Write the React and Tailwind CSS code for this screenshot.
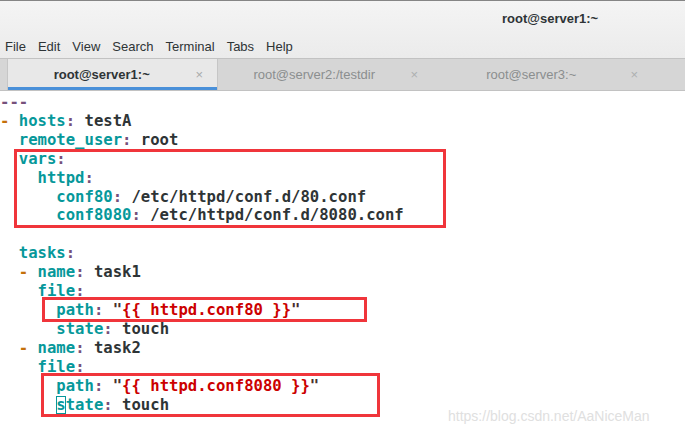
import React from "react";

const mono = { fontFamily: '"DejaVu Sans Mono", "Liberation Mono", monospace' };

const K = ({ children }) => <span className="text-[#06989a]">{children}</span>;
const C = () => <span className="text-[#75507b]">:</span>;
const V = ({ children }) => <span className="text-[#2e3436]">{children}</span>;
const D = () => <span className="text-[#c4700a]">-</span>;
const S = ({ children }) => (
  <>
    <span className="text-[#4a2f2f]">"</span>
    <span className="text-[#cc0000]">{children}</span>
    <span className="text-[#4a2f2f]">"</span>
  </>
);

const lines = [
  [<span className="text-[#75507b]">---</span>],
  [<D />, " ", <K>hosts</K>, <C />, " ", <V>testA</V>],
  ["  ", <K>remote_user</K>, <C />, " ", <V>root</V>],
  ["  ", <K>vars</K>, <C />],
  ["    ", <K>httpd</K>, <C />],
  ["      ", <K>conf80</K>, <C />, " ", <V>/etc/httpd/conf.d/80.conf</V>],
  ["      ", <K>conf8080</K>, <C />, " ", <V>/etc/httpd/conf.d/8080.conf</V>],
  [" "],
  ["  ", <K>tasks</K>, <C />],
  ["  ", <D />, " ", <K>name</K>, <C />, " ", <V>task1</V>],
  ["    ", <K>file</K>, <C />],
  ["      ", <K>path</K>, <C />, " ", <S>{"{{ httpd.conf80 }}"}</S>],
  ["      ", <K>state</K>, <C />, " ", <V>touch</V>],
  ["  ", <D />, " ", <K>name</K>, <C />, " ", <V>task2</V>],
  ["    ", <K>file</K>, <C />],
  ["      ", <K>path</K>, <C />, " ", <S>{"{{ httpd.conf8080 }}"}</S>],
  [
    "      ",
    <span className="text-[#06989a] outline outline-1 outline-[#06989a] -outline-offset-1">s</span>,
    <K>tate</K>,
    <C />,
    " ",
    <V>touch</V>,
  ],
];

const tabs = [
  { label: "root@server1:~", w: "w-[211px]", active: true },
  { label: "root@server2:/testdir", w: "w-[214px]" },
  { label: "root@server3:~", w: "w-[220px]" },
];

export default function App() {
  const ui = { fontFamily: '"Liberation Sans", Arial, sans-serif' };
  return (
    <div className="relative w-[685px] h-[436px] overflow-hidden bg-white">
      <div className="h-[58px] border-t border-[#858585] bg-gradient-to-b from-[#f4f4f4] to-[#ebebeb]" style={ui}>
        <div className="h-[35px] flex items-center pl-[502px] text-[13px] font-bold text-[#2e3436]">
          root@server1:~
        </div>
        <div className="h-[22px] flex items-center gap-[12px] pl-[5px] text-[13px] text-[#2e3436]">
          <span>File</span>
          <span>Edit</span>
          <span>View</span>
          <span>Search</span>
          <span>Terminal</span>
          <span>Tabs</span>
          <span>Help</span>
        </div>
      </div>

      <div className="h-[33px] flex pl-[7px] bg-[#d6d6d6] border-t border-b border-[#c2c2c2]" style={ui}>
        {tabs.map((t) => (
          <div
            key={t.label}
            className={`${t.w} flex items-center ${
              t.active ? "bg-[#e8e8e8] border-l border-r border-[#c6c6c6] shadow-[inset_0_-3px_0_#4a90d9]" : ""
            }`}
          >
            <div
              className={`flex-1 text-center text-[13px] ${
                t.active ? "font-bold text-[#2e3436]" : "text-[#8b8e8f]"
              }`}
            >
              {t.label}
            </div>
            <div className={`mr-[14px] text-[13px] ${t.active ? "text-[#a8abac]" : "text-[#adb0b1]"}`}>×</div>
          </div>
        ))}
      </div>

      <div className="pt-[2px] font-bold text-[15.6px] leading-[18.9px] whitespace-pre" style={mono}>
        {lines.map((l, i) => (
          <div key={i}>{l.map((p, j) => <React.Fragment key={j}>{p}</React.Fragment>)}</div>
        ))}
      </div>

      <div className="absolute left-[14px] top-[149px] w-[432px] h-[79px] border-[3px] border-[#f0353b]" />
      <div className="absolute left-[42px] top-[297px] w-[325px] h-[25px] border-[3px] border-[#f0353b]" />
      <div className="absolute left-[41px] top-[373px] w-[339px] h-[44px] border-[3px] border-[#f0353b]" />

      <div className="absolute left-[448px] top-[406px] text-[14px] text-[#e0e0e0]" style={ui}>
        https://blog.csdn.net/AaNiceMan
      </div>
    </div>
  );
}
